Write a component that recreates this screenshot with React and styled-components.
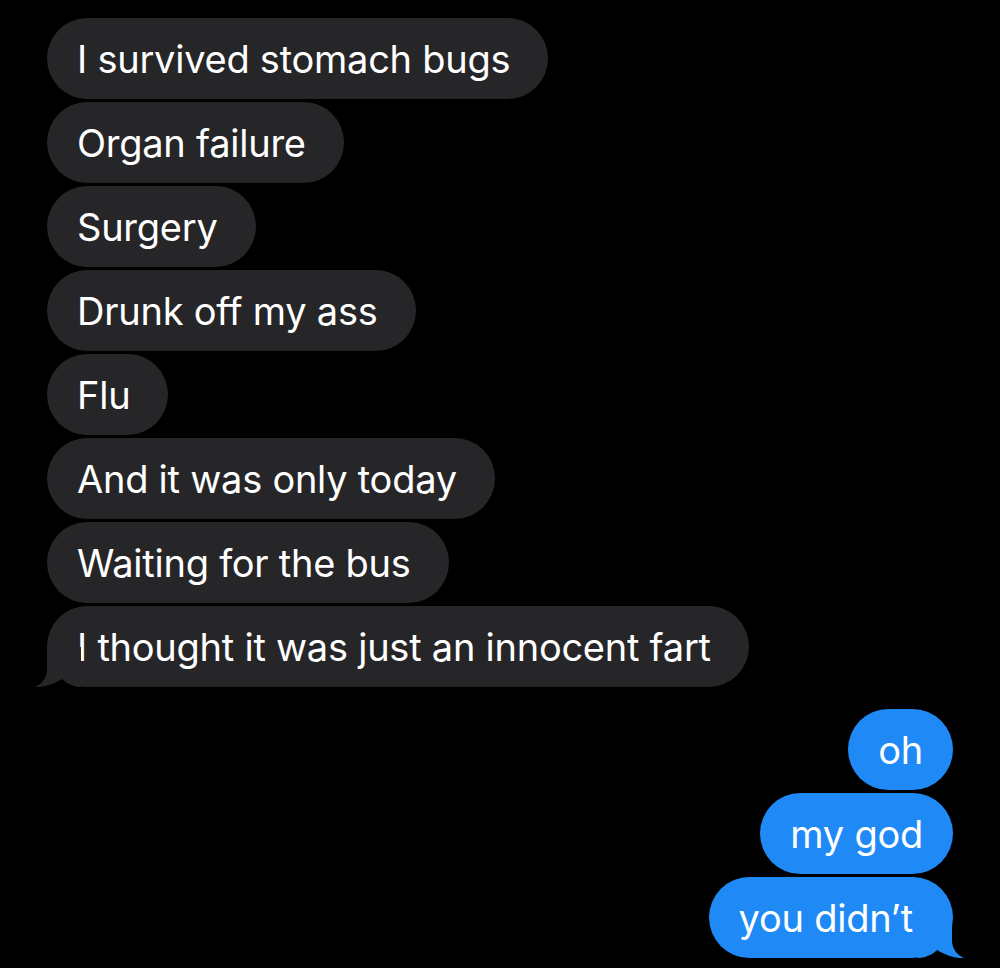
import React from "react";
import styled, { createGlobalStyle } from "styled-components";

const Global = createGlobalStyle`
  html, body { margin: 0; padding: 0; background: #000; }
  body { font-family: Inter, "Noto Sans", sans-serif; }
`;

const Screen = styled.div`
  width: 1000px;
  height: 968px;
  background: #000;
  box-sizing: border-box;
  padding: 18px 47px 0 47px;
  display: flex;
  flex-direction: column;
  overflow: hidden;
`;

const Group = styled.div`
  display: flex;
  flex-direction: column;
  align-items: ${(p) => (p.$sent ? "flex-end" : "flex-start")};
  gap: 3px;
  margin-top: ${(p) => p.$gapTop || 0}px;
`;

const Bubble = styled.div`
  position: relative;
  height: 81px;
  line-height: 82px;
  padding: ${(p) =>
    p.$sent ? (p.$tail ? "0 40px 0 30px" : "0 30px") : "0 38px 0 30px"};
  border-radius: 40.5px;
  background: ${(p) => (p.$sent ? "#1f8af6" : "#262629")};
  color: #fff;
  font-size: 38px;
  letter-spacing: -0.25px;
  white-space: nowrap;
`;

const TailSvg = styled.svg`
  position: absolute;
  bottom: 0;
  width: 46px;
  height: 40px;
  ${(p) => (p.$sent ? "right: -11px; transform: scaleX(-1);" : "left: -12px;")}
`;

const Tail = ({ sent, color }) => (
  <TailSvg $sent={sent} viewBox="0 0 46 40">
    <path
      d="M12 0 L12 22 C12 31 7 37 0 40 C7 40.6 17 38 27 32 C31 36 37 39.6 46 40 L46 0 Z"
      fill={color}
    />
  </TailSvg>
);

const received = [
  "I survived stomach bugs",
  "Organ failure",
  "Surgery",
  "Drunk off my ass",
  "Flu",
  "And it was only today",
  "Waiting for the bus",
  "I thought it was just an innocent fart",
];

const sent = ["oh", "my god", "you didn\u2019t"];

export default function App() {
  return (
    <>
      <Global />
      <Screen>
        <Group>
          {received.map((t, i) => (
            <Bubble key={i}>
              {i === received.length - 1 && <Tail color="#262629" />}
              {t}
            </Bubble>
          ))}
        </Group>
        <Group $sent $gapTop={22}>
          {sent.map((t, i) => {
            const last = i === sent.length - 1;
            return (
              <Bubble key={i} $sent $tail={last}>
                {last && <Tail sent color="#1f8af6" />}
                {t}
              </Bubble>
            );
          })}
        </Group>
      </Screen>
    </>
  );
}
